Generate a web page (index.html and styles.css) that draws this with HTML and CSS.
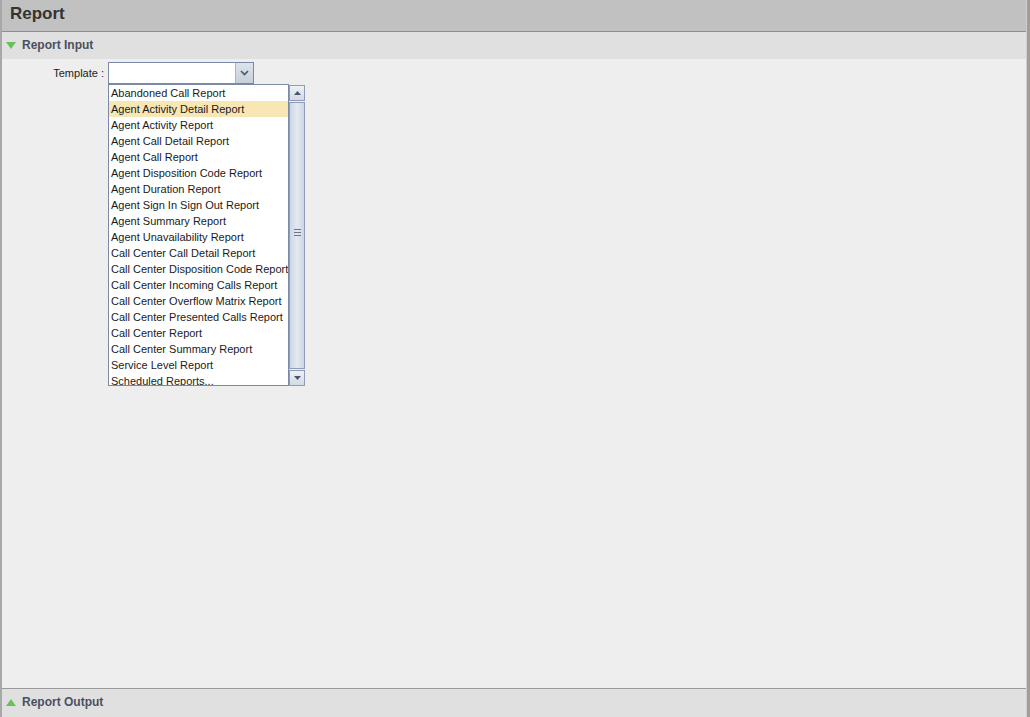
FILE: index.html
```html
<!DOCTYPE html>
<html>
<head>
<meta charset="utf-8">
<link rel="stylesheet" href="styles.css">
</head>
<body>
<div class="frame">
  <div class="panel">
    <div class="title-bar">Report</div>
    <div class="section-head top">
      <span class="tri-down"></span><span class="section-label">Report Input</span>
    </div>
    <div class="content">
      <div class="form-row">
        <label class="field-label">Template :</label>
        <div class="combo">
          <div class="combo-input"></div>
          <div class="combo-btn">
            <svg width="9" height="6" viewBox="0 0 9 6"><path d="M1 1 L4.5 4.5 L8 1" fill="none" stroke="#4a5670" stroke-width="1.6"/></svg>
          </div>
          <div class="popup">
            <ul class="list">
              <li>Abandoned Call Report</li>
              <li class="sel">Agent Activity Detail Report</li>
              <li>Agent Activity Report</li>
              <li>Agent Call Detail Report</li>
              <li>Agent Call Report</li>
              <li>Agent Disposition Code Report</li>
              <li>Agent Duration Report</li>
              <li>Agent Sign In Sign Out Report</li>
              <li>Agent Summary Report</li>
              <li>Agent Unavailability Report</li>
              <li>Call Center Call Detail Report</li>
              <li>Call Center Disposition Code Report</li>
              <li>Call Center Incoming Calls Report</li>
              <li>Call Center Overflow Matrix Report</li>
              <li>Call Center Presented Calls Report</li>
              <li>Call Center Report</li>
              <li>Call Center Summary Report</li>
              <li>Service Level Report</li>
              <li>Scheduled Reports...</li>
            </ul>
            <div class="scrollbar">
              <div class="sb-btn"><svg width="7" height="4" viewBox="0 0 7 4"><path d="M0 4 L3.5 0 L7 4 Z" fill="#4a5670"/></svg></div>
              <div class="sb-thumb"><span class="grip"></span></div>
              <div class="sb-btn"><svg width="7" height="4" viewBox="0 0 7 4"><path d="M0 0 L3.5 4 L7 0 Z" fill="#4a5670"/></svg></div>
            </div>
          </div>
        </div>
      </div>
    </div>
    <div class="section-head bottom">
      <span class="tri-up"></span><span class="section-label">Report Output</span>
    </div>
  </div>
  <div class="edge"></div>
</div>
</body>
</html>
```
FILE: styles.css
```css
html, body {
  margin: 0;
  padding: 0;
}
body {
  width: 1030px;
  height: 717px;
  overflow: hidden;
  font-family: "Liberation Sans", Arial, sans-serif;
  background: #eeeeee;
}
.frame {
  display: flex;
  height: 717px;
}
.panel {
  flex: 1;
  display: flex;
  flex-direction: column;
  border-left: 2px solid #a8a8a8;
  border-right: 1px solid #d0d0d0;
}
.edge {
  width: 3px;
  background: #a59c94;
}
.title-bar {
  background: #c1c1c1;
  border-bottom: 1px solid #8e8e8e;
  box-sizing: border-box;
  height: 32px;
  padding-left: 8px;
  font-size: 17px;
  font-weight: bold;
  color: #333333;
  line-height: 28px;
}
.section-head {
  background: #e0e0e0;
  display: flex;
  align-items: center;
  padding-left: 4px;
  box-sizing: border-box;
}
.section-head.top {
  height: 27px;
  padding-bottom: 2px;
}
.section-head.bottom {
  border-top: 1px solid #999999;
  height: 29px;
  padding-bottom: 2px;
}
.section-label {
  font-size: 12px;
  font-weight: bold;
  color: #4a5060;
  margin-left: 6px;
}
.tri-down {
  width: 0;
  height: 0;
  border-left: 5px solid transparent;
  border-right: 5px solid transparent;
  border-top: 7px solid #6cc05a;
  margin-top: 1px;
}
.tri-up {
  width: 0;
  height: 0;
  border-left: 5px solid transparent;
  border-right: 5px solid transparent;
  border-bottom: 7px solid #6cc05a;
}
.content {
  flex: 1;
  background: #eeeeee;
  padding-top: 3px;
}
.form-row {
  display: flex;
  align-items: center;
}
.field-label {
  width: 106px;
  text-align: right;
  font-size: 11px;
  color: #222;
  padding-right: 4px;
  box-sizing: border-box;
}
.combo {
  position: relative;
  display: flex;
  width: 146px;
  height: 22px;
  border: 1px solid #7a8aa6;
  box-sizing: border-box;
  background: #fff;
}
.combo-input {
  flex: 1;
}
.combo-btn {
  width: 17px;
  border-left: 1px solid #a8b4c8;
  background: linear-gradient(#dde3ec, #c6cfdc);
  display: flex;
  align-items: center;
  justify-content: center;
}
.popup {
  position: absolute;
  left: -1px;
  top: 21px;
  display: flex;
  z-index: 2;
}
.list {
  list-style: none;
  margin: 0;
  padding: 0;
  width: 181px;
  height: 302px;
  overflow: hidden;
  background: #fff;
  border: 1px solid #7a8aa6;
  box-sizing: border-box;
}
.list li {
  height: 16px;
  line-height: 16px;
  font-size: 11px;
  color: #1a1a1a;
  padding-left: 2px;
  white-space: nowrap;
}
.list li.sel {
  background: #f8e7b4;
}
.scrollbar {
  width: 16px;
  height: 302px;
  display: flex;
  flex-direction: column;
  box-sizing: border-box;
  padding: 1px 0 0 0;
}
.sb-btn {
  height: 16px;
  border: 1px solid #8e9cb4;
  box-sizing: border-box;
  background: linear-gradient(#eef1f6, #d3dae6);
  display: flex;
  align-items: center;
  justify-content: center;
}
.sb-thumb {
  flex: 1;
  border: 1px solid #8e9cb4;
  background: linear-gradient(90deg, #cdd6e4, #e3e9f1 50%, #cdd6e4);
  display: flex;
  align-items: center;
  justify-content: center;
  margin: 1px 0;
  padding-bottom: 6px;
}
.grip {
  width: 7px;
  height: 5px;
  border-top: 1px solid #6a7690;
  border-bottom: 1px solid #6a7690;
  position: relative;
}
.grip::after {
  content: "";
  position: absolute;
  left: 0;
  right: 0;
  top: 2px;
  height: 1px;
  background: #6a7690;
}
```
